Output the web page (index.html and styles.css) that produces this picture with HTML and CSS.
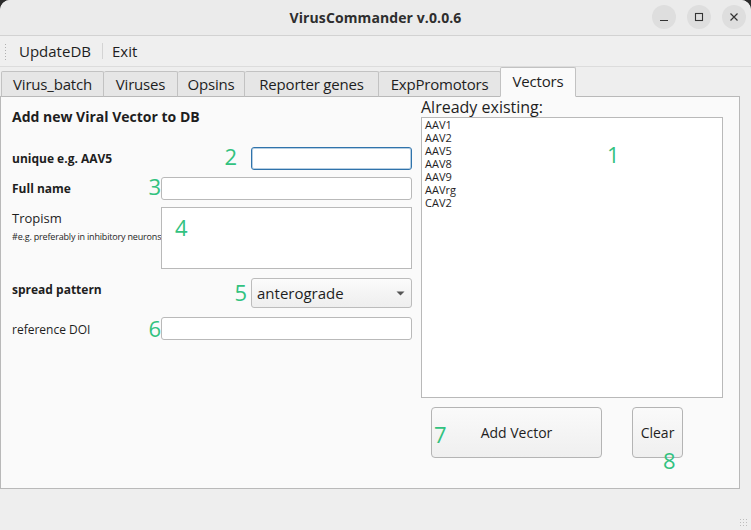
FILE: index.html
```html
<!DOCTYPE html>
<html>
<head>
<meta charset="utf-8">
<link rel="stylesheet" href="styles.css">
</head>
<body>
<div class="window">
  <div class="titlebar">
    <div class="title">VirusCommander v.0.0.6</div>
    <div class="wm-buttons">
      <span class="wm-btn"><svg width="10" height="10" viewBox="0 0 10 10"><path d="M1 8.5H9" stroke="#333" stroke-width="1.2"/></svg></span>
      <span class="wm-btn"><svg width="10" height="10" viewBox="0 0 10 10"><rect x="1.5" y="1.5" width="7" height="7" fill="none" stroke="#333" stroke-width="1.1"/></svg></span>
      <span class="wm-btn"><svg width="10" height="10" viewBox="0 0 10 10"><path d="M1.5 1.5L8.5 8.5M8.5 1.5L1.5 8.5" stroke="#333" stroke-width="1.2"/></svg></span>
    </div>
  </div>
  <div class="menubar">
    <span class="grip"></span>
    <span class="menu-item">UpdateDB</span>
    <span class="menu-sep"></span>
    <span class="menu-item">Exit</span>
  </div>
  <div class="tabbar">
    <span class="tab t1">Virus_batch</span>
    <span class="tab t2">Viruses</span>
    <span class="tab t3">Opsins</span>
    <span class="tab t4">Reporter genes</span>
    <span class="tab t5">ExpPromotors</span>
    <span class="tab active">Vectors</span>
  </div>
  <div class="pane">
    <div class="left">
      <div class="heading">Add new Viral Vector to DB</div>
      <div class="row r1">
        <span class="label bold">unique e.g. AAV5</span>
        <div class="field w160"><span class="num n2">2</span><div class="input focus"></div></div>
      </div>
      <div class="row r2">
        <span class="label bold">Full name</span>
        <div class="field w250"><span class="num n3">3</span><div class="input"></div></div>
      </div>
      <div class="row r3">
        <div class="label-stack">
          <span class="label big">Tropism</span>
          <span class="hint">#e.g. preferably in inhibitory neurons</span>
        </div>
        <div class="field w250"><span class="num n4">4</span><div class="textarea"></div></div>
      </div>
      <div class="row r4">
        <span class="label bold">spread pattern</span>
        <div class="field w160"><span class="num n5">5</span>
          <div class="combo"><span>anterograde</span><svg width="9" height="5" viewBox="0 0 9 5"><path d="M0.5 0.5H8.5L4.5 4.5Z" fill="#555"/></svg></div>
        </div>
      </div>
      <div class="row r5">
        <span class="label">reference DOI</span>
        <div class="field w250"><span class="num n6">6</span><div class="input"></div></div>
      </div>
    </div>
    <div class="right">
      <div class="existing-label">Already existing:</div>
      <div class="list">
        <span class="num n1">1</span>
        <div class="item">AAV1</div>
        <div class="item">AAV2</div>
        <div class="item">AAV5</div>
        <div class="item">AAV8</div>
        <div class="item">AAV9</div>
        <div class="item">AAVrg</div>
        <div class="item">CAV2</div>
      </div>
      <div class="buttons">
        <div class="btn add"><span class="num n7">7</span>Add Vector</div>
        <div class="btn clear"><span class="num n8">8</span>Clear</div>
      </div>
    </div>
  </div>
  <div class="statusbar"><span class="sizegrip"></span></div>
</div>
</body>
</html>
```

FILE: styles.css
```css
* { box-sizing: border-box; }
html, body { margin: 0; padding: 0; }
body {
  width: 751px;
  height: 530px;
  overflow: hidden;
  background: #2b2b2b;
  font-family: "Open Sans", "Noto Sans", sans-serif;
  color: #1e1e1e;
}
.window {
  width: 751px;
  height: 530px;
  background: #eeeeee;
  border-radius: 10px 10px 0 0;
  overflow: hidden;
  display: flex;
  flex-direction: column;
}
.titlebar {
  height: 36px;
  flex: none;
  background: #ebebeb;
  border-bottom: 1px solid #d2d2d2;
  display: flex;
  align-items: center;
  justify-content: center;
  position: relative;
}
.title {
  font-weight: 700;
  font-size: 14px;
  color: #2e2e2e;
  letter-spacing: 0.1px;
}
.wm-buttons {
  position: absolute;
  right: 5px;
  top: 5px;
  display: flex;
  gap: 11px;
}
.wm-btn {
  width: 24px;
  height: 24px;
  border-radius: 50%;
  background: #dedede;
  display: flex;
  align-items: center;
  justify-content: center;
}
.menubar {
  height: 31px;
  flex: none;
  background: #efefef;
  border-bottom: 1px solid #dcdcdc;
  display: flex;
  align-items: center;
  padding-left: 4px;
  font-size: 15px;
}
.grip {
  width: 3px;
  height: 17px;
  background-image: radial-gradient(circle, #b0b0b0 0.7px, transparent 0.9px);
  background-size: 3px 3px;
  margin-right: 12px;
}
.menu-item { color: #1e1e1e; }
.menu-sep {
  width: 1px;
  height: 16px;
  background: #d4d4d4;
  margin: 0 9px 0 11px;
}
.tabbar {
  height: 29px;
  flex: none;
  display: flex;
  align-items: flex-end;
  padding-left: 1px;
  font-size: 15px;
  position: relative;
  z-index: 1;
}
.tab {
  height: 26px;
  margin-bottom: -1px;
  border: 1px solid #c2c2c2;
  border-bottom-color: #b9b9b9;
  border-left: none;
  background: #e6e6e6;
  display: flex;
  align-items: center;
  justify-content: center;
  border-radius: 2px 2px 0 0;
  color: #1e1e1e;
  letter-spacing: -0.2px;
}
.t1 { width: 103px; border-left: 1px solid #c2c2c2; }
.t2 { width: 74px; }
.t3 { width: 67px; }
.t4 { width: 134px; }
.t5 { width: 122px; }
.tab.active {
  width: 76px;
  height: 30px;
  background: #fafafa;
  border-left: 1px solid #c2c2c2;
  margin-left: -1px;
  border-bottom-color: #fafafa;
  padding-bottom: 3px;
}
.pane {
  width: 740px;
  height: 393px;
  flex: none;
  background: #fafafa;
  border: 1px solid #b9b9b9;
  display: flex;
  padding: 0 0 0 11px;
}
.left {
  width: 400px;
  display: flex;
  flex-direction: column;
}
.heading {
  font-weight: 700;
  font-size: 14px;
  height: 22px;
  line-height: 22px;
  margin-top: 9px;
  margin-bottom: 19px;
}
.row {
  display: flex;
  justify-content: space-between;
  align-items: flex-start;
}
.r1 { height: 23px; margin-bottom: 7px; align-items: center; }
.r2 { height: 23px; margin-bottom: 7px; align-items: center; }
.r3 { height: 62px; margin-bottom: 9px; }
.r4 { height: 30px; margin-bottom: 9px; }
.r5 { height: 23px; align-items: center; }
.label { font-size: 12px; }
.label.bold { font-weight: 700; }
.r4 .label { line-height: 24px; }
.r5 .label { margin-top: 1px; }
.label-stack {
  display: flex;
  flex-direction: column;
  width: 0;
  white-space: nowrap;
  padding-top: 2px;
}
.label.big { font-size: 13px; line-height: 19px; }
.hint { font-size: 9px; line-height: 12px; margin-top: 3px; letter-spacing: -0.18px; }
.field { position: relative; }
.w160 { width: 161px; }
.w250 { width: 251px; }
.input {
  height: 23px;
  background: #ffffff;
  border: 1px solid #b9b9b9;
  border-radius: 3px;
}
.input.focus {
  border-color: #2f73ab;
  box-shadow: inset 0 0 0 1px rgba(47, 115, 171, 0.35);
}
.textarea {
  height: 62px;
  background: #ffffff;
  border: 1px solid #b9b9b9;
  position: relative;
  z-index: 1;
}
.combo {
  height: 30px;
  border: 1px solid #bcbcbc;
  border-radius: 3px;
  background: linear-gradient(#fbfbfb, #eeeeee);
  display: flex;
  align-items: center;
  justify-content: space-between;
  padding: 0 6px 0 5px;
  font-size: 15px;
}
.num {
  position: absolute;
  font-size: 22px;
  line-height: 22px;
  color: #32c27f;
  z-index: 2;
}
.n2 { right: calc(100% + 14px); top: -2px; }
.n3 { right: calc(100% + 0px); top: -2px; }
.n4 { left: 14px; top: 9px; }
.n5 { right: calc(100% + 4px); top: 3px; }
.n6 { right: calc(100% + 0px); top: 0px; }
.n1 { left: 185px; top: 25px; }
.n7 { left: 2px; top: 15px; }
.n8 { left: 30px; top: 41px; }
.right {
  margin-left: 9px;
  width: 302px;
  display: flex;
  flex-direction: column;
}
.existing-label {
  font-size: 16px;
  height: 20px;
  line-height: 21px;
  margin-top: 0px;
}
.list {
  position: relative;
  height: 281px;
  background: #ffffff;
  border: 1px solid #b9b9b9;
  padding: 0 0 0 3px;
}
.item {
  font-size: 11px;
  line-height: 13px;
}
.buttons {
  display: flex;
  gap: 30px;
  padding-left: 10px;
  margin-top: 9px;
}
.btn {
  position: relative;
  height: 51px;
  border: 1px solid #b4b4b4;
  border-radius: 4px;
  background: linear-gradient(#fafafa, #efefef);
  display: flex;
  align-items: center;
  justify-content: center;
  font-size: 14px;
}
.btn.add { width: 171px; }
.btn.clear { width: 51px; }
.statusbar {
  flex: 1;
  position: relative;
}
.sizegrip {
  position: absolute;
  right: 2px;
  bottom: 2px;
  width: 10px;
  height: 10px;
  background-image: radial-gradient(circle, #bdbdbd 0.7px, transparent 0.9px);
  background-size: 3px 3px;
}
```
